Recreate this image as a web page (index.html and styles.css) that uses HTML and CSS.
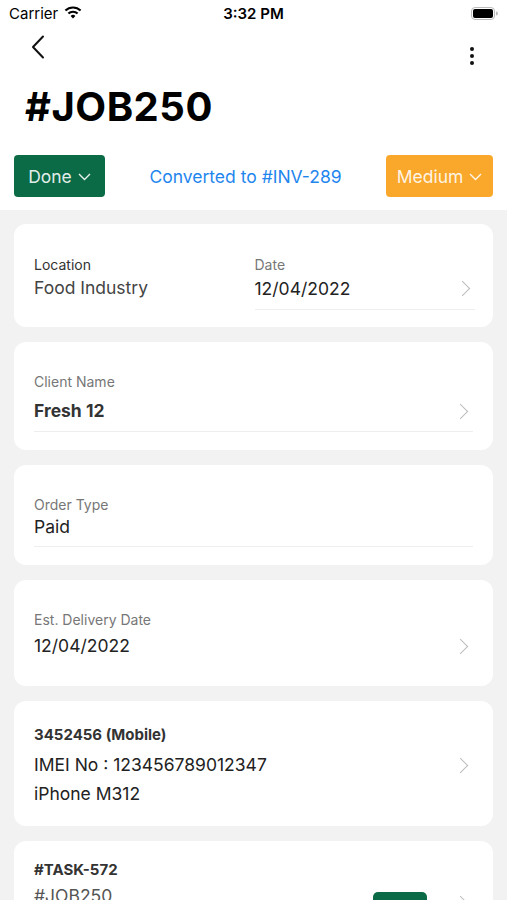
FILE: index.html
```html
<!DOCTYPE html>
<html>
<head>
  <meta charset="utf-8">
  <meta name="viewport" content="width=device-width, initial-scale=1">
  <title>#JOB250</title>
  <link rel="stylesheet" href="styles.css">
</head>
<body>
  <div class="screen">
    <div class="header">
      <div class="statusbar">
        <div class="carrier">Carrier
          <svg class="wifi" width="18" height="13" viewBox="0 0 18 13">
            <path d="M9 12.5 L6.6 9.9 A3.4 3.4 0 0 1 11.4 9.9 Z" fill="#000"/>
            <path d="M4.4 7.6 A6.6 6.6 0 0 1 13.6 7.6" stroke="#000" stroke-width="2.1" fill="none"/>
            <path d="M1.4 4.6 A10.8 10.8 0 0 1 16.6 4.6" stroke="#000" stroke-width="2.1" fill="none"/>
          </svg>
        </div>
        <div class="clock">3:32 PM</div>
        <div class="battery">
          <svg width="27" height="13" viewBox="0 0 27 13">
            <rect x="0.5" y="0.5" width="23" height="12" rx="3.5" fill="none" stroke="#bbb"/>
            <rect x="2" y="2" width="20" height="9" rx="2" fill="#000"/>
            <path d="M25 4.5 v4 a2 2 0 0 0 0 -4z" fill="#bbb"/>
          </svg>
        </div>
      </div>
      <div class="navbar">
        <svg class="back" width="14" height="24" viewBox="0 0 14 24">
          <path d="M12 1.5 L2 12 L12 22.5" stroke="#111" stroke-width="2" fill="none" stroke-linecap="round" stroke-linejoin="round"/>
        </svg>
        <div class="more"><span></span><span></span><span></span></div>
      </div>
      <h1 class="title">#JOB250</h1>
      <div class="actions">
        <div class="pill pill-done">Done <svg class="caret" width="13" height="8" viewBox="0 0 13 8"><path d="M1 1 L6.5 6.5 L12 1" stroke="currentColor" stroke-width="1.4" fill="none"/></svg></div>
        <div class="converted">Converted to #INV-289</div>
        <div class="pill pill-medium">Medium <svg class="caret" width="13" height="8" viewBox="0 0 13 8"><path d="M1 1 L6.5 6.5 L12 1" stroke="currentColor" stroke-width="1.4" fill="none"/></svg></div>
      </div>
    </div>

    <div class="content">
      <div class="card card-location">
        <div class="col">
          <div class="label label-dark">Location</div>
          <div class="value value-soft">Food Industry</div>
        </div>
        <div class="col">
          <div class="label">Date</div>
          <div class="value-row line">
            <div class="value">12/04/2022</div>
            <span class="chevron"></span>
          </div>
        </div>
      </div>

      <div class="card card-client">
        <div class="label">Client Name</div>
        <div class="value-row line">
          <div class="value value-bold">Fresh 12</div>
          <span class="chevron"></span>
        </div>
      </div>

      <div class="card card-order">
        <div class="label">Order Type</div>
        <div class="value-row line">
          <div class="value">Paid</div>
        </div>
      </div>

      <div class="card card-delivery">
        <div class="label">Est. Delivery Date</div>
        <div class="value-row">
          <div class="value">12/04/2022</div>
          <span class="chevron"></span>
        </div>
      </div>

      <div class="card card-device">
        <div class="strong">3452456 (Mobile)</div>
        <div class="value-row">
          <div class="value">IMEI No : 123456789012347</div>
          <span class="chevron"></span>
        </div>
        <div class="value model">iPhone M312</div>
      </div>

      <div class="card card-task">
        <div class="strong">#TASK-572</div>
        <div class="value-row task-row">
          <div class="value value-grey">#JOB250</div>
          <div class="task-side">
            <span class="tag"></span>
            <span class="chevron"></span>
          </div>
        </div>
      </div>
    </div>
  </div>
</body>
</html>
```

FILE: styles.css
```css
body {
    margin: 0;
    font-family: Inter, "Liberation Sans", sans-serif;
    color: #222;
    background-color: #f2f2f2;
}
.screen {
    width: 507px;
    height: 900px;
    overflow: hidden;
}
.header {
    background-color: #fff;
    padding-bottom: 13px;
}
.statusbar {
    height: 27px;
    display: flex;
    align-items: center;
    justify-content: space-between;
    padding: 0 9px;
    font-size: 15px;
    color: #000;
}
.carrier {
    display: flex;
    align-items: center;
    gap: 6px;
    width: 120px;
}
.wifi { margin-top: -3px; }
.clock { font-weight: 600; }
.battery {
    width: 120px;
    display: flex;
    justify-content: flex-end;
}
.navbar {
    height: 46px;
    display: flex;
    align-items: center;
    justify-content: space-between;
    padding: 0 33px 0 31px;
}
.back { margin-top: -6px; }
.more {
    display: flex;
    flex-direction: column;
    gap: 3px;
    margin-top: 12px;
}
.more span {
    width: 4px;
    height: 4px;
    border-radius: 50%;
    background-color: #111;
}
.title {
    margin: 10px 0 0 25px;
    font-size: 40px;
    line-height: 48px;
    font-weight: 700;
    color: #000;
    letter-spacing: 0.5px;
}
.actions {
    margin: 24px 14px 0;
    height: 42px;
    display: flex;
    align-items: center;
    justify-content: space-between;
}
.pill {
    height: 42px;
    border-radius: 4px;
    display: flex;
    align-items: center;
    justify-content: center;
    gap: 6px;
    font-size: 17.5px;
    color: rgba(255, 255, 255, 0.9);
}
.pill-done {
    width: 91px;
    background-color: #0c6b47;
}
.pill-medium {
    width: 107px;
    background-color: #f9a82b;
}
.caret { margin-top: 2px; }
.converted {
    font-size: 17.5px;
    color: #1f86ee;
}
.content {
    padding: 14px;
    display: flex;
    flex-direction: column;
    gap: 15px;
}
.card {
    background-color: #fff;
    border-radius: 12px;
    padding: 30px 20px 18px;
}
.label {
    font-size: 14px;
    line-height: 20px;
    color: #777;
}
.label-dark { color: #333; }
.value {
    font-size: 17.5px;
    line-height: 24px;
    color: #222;
}
.value-soft { color: #444; }
.value-bold { font-weight: 700; color: #333; }
.value-grey { color: #555; }
.value-row {
    display: flex;
    align-items: center;
    justify-content: space-between;
    padding-right: 5px;
}
.line {
    border-bottom: 1px solid #eee;
    padding-bottom: 8px;
}
.chevron {
    width: 10px;
    height: 10px;
    border-right: 1.5px solid #bbb;
    border-top: 1.5px solid #bbb;
    transform: rotate(45deg);
    margin-right: 2px;
}
.strong {
    font-size: 15px;
    line-height: 24px;
    font-weight: 700;
    color: #333;
}
.card-location {
    display: grid;
    grid-template-columns: 1fr 1fr;
    padding: 31px 18px 17px 20px;
}
.card-location .value { margin-top: 2px; }
.card-location .col:first-child .value { margin-top: 1px; }
.card-client .value-row { margin-top: 7px; }
.card-order .value-row { padding-bottom: 7px; }
.card-delivery { padding-bottom: 28px; }
.card-delivery .value-row { margin-top: 4px; }
.card-device { padding: 22px 20px 20px; }
.card-device .value-row { margin-top: 6px; }
.model { margin-top: 5px; }
.card-task { padding: 17px 20px 40px; }
.task-row {
    margin-top: 2px;
    align-items: flex-start;
}
.task-side {
    display: flex;
    align-items: flex-start;
    gap: 28px;
}
.tag {
    width: 54px;
    height: 28px;
    border-radius: 5px;
    background-color: #0c6b47;
    margin-top: 8px;
}
.task-side .chevron { margin-top: 14px; }
```
